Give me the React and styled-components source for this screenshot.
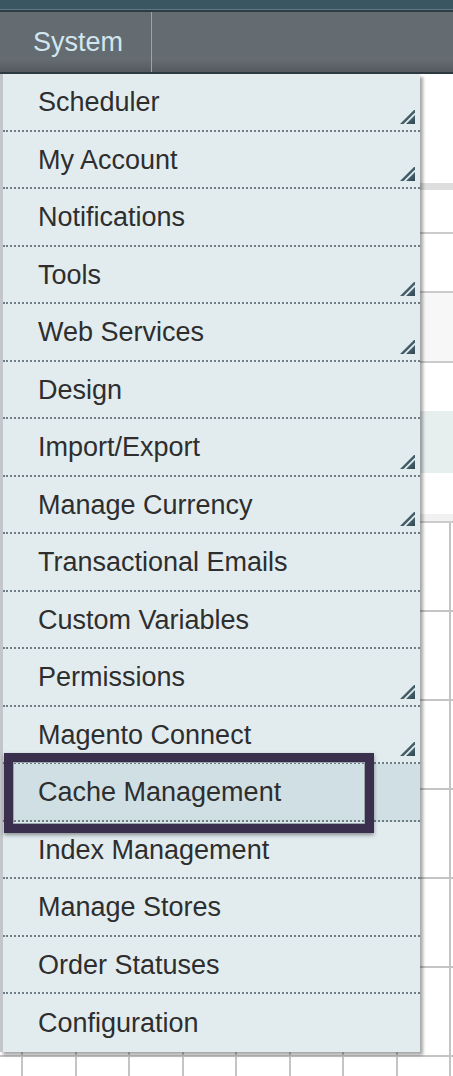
import styled, { createGlobalStyle } from "styled-components";

const GlobalStyle = createGlobalStyle`
  html, body {
    margin: 0;
    padding: 0;
    background: #ffffff;
    font-family: "Liberation Sans", Arial, sans-serif;
  }
`;

const Page = styled.div`
  position: relative;
  width: 453px;
  height: 1076px;
  overflow: hidden;
  background: #ffffff;
`;

const TopBand = styled.div`
  height: 9px;
  background: #3a5661;
  border-bottom: 1px solid #5f7883;
`;

const NavBar = styled.div`
  display: flex;
  height: 60px;
  border-top: 2px solid #2b3c45;
  border-bottom: 2px solid #2c3a41;
  background: linear-gradient(to bottom, #646b71 0, #646b71 80%, #55595d 100%);
`;

const NavTab = styled.div`
  width: 152px;
  padding-left: 33px;
  box-sizing: border-box;
  border-right: 1px solid #9ea3a7;
  color: #d2e6f0;
  font-size: 27px;
  line-height: 60px;
`;

const Band = styled.div`
  height: ${(p) => p.$h}px;
  background: ${(p) => p.$bg || "#ffffff"};
  border-bottom: ${(p) => (p.$line ? "2px solid #cbcbcb" : "none")};
`;

const Grid = styled.div`
  height: 560px;
  background-color: #ffffff;
  background-image:
    repeating-linear-gradient(to right, transparent 0, transparent 21px, #c4c4c4 21px, #c4c4c4 23px, transparent 23px, transparent 53.5px),
    repeating-linear-gradient(to bottom, transparent 0, transparent 87px, #c4c4c4 87px, #c4c4c4 89px);
`;

const Menu = styled.ul`
  position: absolute;
  top: 74px;
  left: 0;
  width: 420px;
  margin: 0;
  padding: 0;
  list-style: none;
  box-sizing: border-box;
  background: #e2ecef;
  border-left: 3px solid #c2c6c8;
  box-shadow: 3px 3px 3px rgba(0, 0, 0, 0.35);
`;

const Item = styled.li`
  position: relative;
  display: flex;
  justify-content: space-between;
  align-items: flex-end;
  height: 57.5px;
  box-sizing: border-box;
  padding: 0 5px 6px 35px;
  background: ${(p) => (p.$active ? "#cfdfe3" : "transparent")};
  border-bottom: ${(p) => (p.$last ? "none" : "2px dotted #6f7e84")};
`;

const Label = styled.span`
  align-self: center;
  margin-top: 7px;
  color: #2e2e2e;
  font-size: 27px;
  line-height: 30px;
  white-space: nowrap;
`;

const Arrow = styled.svg`
  width: 15px;
  height: 15px;
  flex: none;
`;

const Highlight = styled.div`
  position: absolute;
  left: 1px;
  top: -11px;
  width: 370px;
  height: 80px;
  box-sizing: border-box;
  border: 9px solid #3a2f4d;
  box-shadow: 0 2px 4px rgba(0, 0, 0, 0.4), inset 0 0 0 1px #9aa7ab;
  pointer-events: none;
`;

const items = [
  ["Scheduler", true],
  ["My Account", true],
  ["Notifications", false],
  ["Tools", true],
  ["Web Services", true],
  ["Design", false],
  ["Import/Export", true],
  ["Manage Currency", true],
  ["Transactional Emails", false],
  ["Custom Variables", false],
  ["Permissions", true],
  ["Magento Connect", true],
  ["Cache Management", false],
  ["Index Management", false],
  ["Manage Stores", false],
  ["Order Statuses", false],
  ["Configuration", false],
];

const SubArrow = () => (
  <Arrow viewBox="0 0 15 15">
    <defs>
      <linearGradient id="ag" x1="0" y1="0" x2="1" y2="1">
        <stop offset="0" stopColor="#5c7883" />
        <stop offset="1" stopColor="#2f4650" />
      </linearGradient>
    </defs>
    <polygon points="0,15 14,1 15,1 15,3.5 3.5,15" fill="url(#ag)" />
    <polygon points="6,15 15,6 15,15" fill="url(#ag)" />
  </Arrow>
);

export default function App() {
  return (
    <Page>
      <GlobalStyle />
      <TopBand />
      <NavBar>
        <NavTab>System</NavTab>
      </NavBar>
      <Band $h={109} />
      <Band $h={7} $bg="#dedede" />
      <Band $h={42} $line />
      <Band $h={57} $line />
      <Band $h={68} $bg="#f7f7f7" $line />
      <Band $h={48} />
      <Band $h={62} $bg="#e6eeee" />
      <Band $h={41} />
      <Band $h={7} $bg="#f1f1f1" $line />
      <Grid />
      <Menu>
        {items.map(([name, sub], i) => (
          <Item
            key={name}
            $active={name === "Cache Management"}
            $last={i === items.length - 1}
          >
            <Label>{name}</Label>
            {sub && <SubArrow />}
            {name === "Cache Management" && <Highlight />}
          </Item>
        ))}
      </Menu>
    </Page>
  );
}
